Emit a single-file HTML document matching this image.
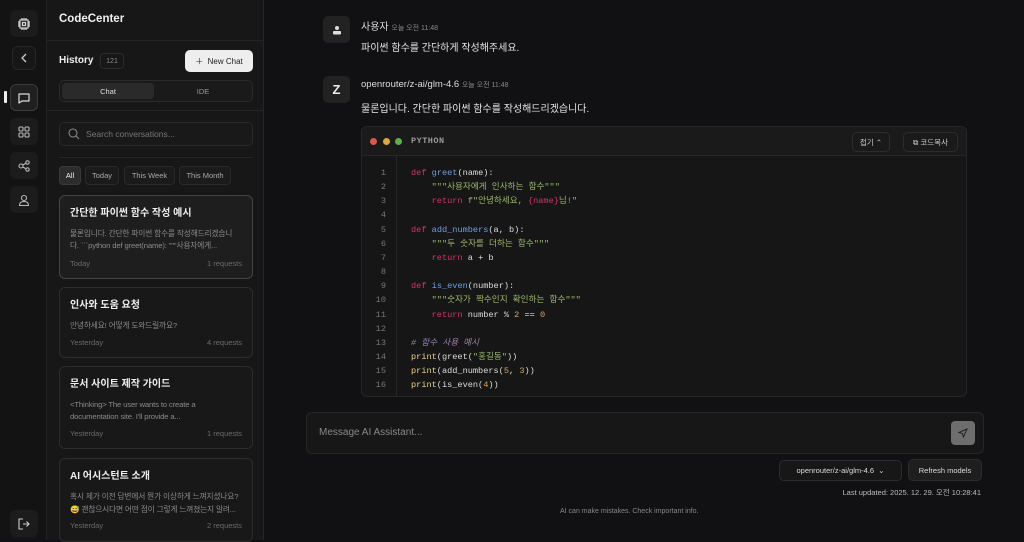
<!DOCTYPE html>
<html><head><meta charset="utf-8"><style>
*{box-sizing:border-box;margin:0;padding:0}
body{width:1024px;height:540px;overflow:hidden;background:#111113;font-family:"Liberation Sans","Noto Sans CJK KR",sans-serif;color:#e5e5e5;position:relative}
.a{position:absolute}
.rail{left:0;top:0;width:47px;height:540px;background:#131313;border-right:1px solid #222}
.ri{position:absolute;left:10px;width:28px;height:27px;border-radius:6px;background:#1c1c1c;display:flex;align-items:center;justify-content:center}
.side{left:47px;top:0;width:217px;height:540px;background:#171717;border-right:1px solid #262626}
.card{position:absolute;left:12px;width:194px;border:1px solid #2c2c2c;border-radius:6px;background:#181818;padding:0 9px 0 10px}
.card h4{font-size:10px;font-weight:bold;color:#eee;margin-top:12px;line-height:12px}
.card p{font-size:7.7px;color:#8a8a8a;line-height:12px;margin-top:8px;letter-spacing:-0.15px;white-space:nowrap;overflow:hidden;text-overflow:ellipsis}
.card .f{position:absolute;left:10px;right:10px;bottom:10px;display:flex;justify-content:space-between;font-size:7.5px;color:#6a6a6a}
.chip{position:absolute;top:166px;height:19px;border:1px solid #2a2a2a;border-radius:4px;font-size:7.5px;color:#aaa;display:flex;align-items:center;justify-content:center;background:#1b1b1b}
.code{left:361px;top:126px;width:606px;height:271px;background:#161616;border:1px solid #262626;border-radius:6px;overflow:hidden}
.ln{position:absolute;left:0;top:29px;width:35px;height:300px;border-right:1px solid #262626}
pre{font-family:"Liberation Mono","Noto Sans CJK KR",monospace;font-size:8.6px;line-height:14.15px;color:#ddd}
.k{color:#d6336c}.fn{color:#6d9fe0}.s{color:#9ab86a}.n{color:#e0a060}.c{color:#9a80b0;font-style:italic}.y{color:#e8d28a}
.btn{position:absolute;height:20px;border:1px solid #2c2c2c;border-radius:5px;background:#1a1a1a;font-size:7.5px;color:#ccc;display:flex;align-items:center;justify-content:center}
</style></head><body>
<div class="a rail">
 <div class="ri" style="top:10px"><svg width="14" height="14" viewBox="0 0 14 14" fill="none" stroke="#ddd" stroke-width="1.2"><rect x="3" y="3" width="8" height="8"/><rect x="5.5" y="5.5" width="3" height="3"/><path d="M5 1v2M7 1v2M9 1v2M5 11v2M7 11v2M9 11v2M1 5h2M1 7h2M1 9h2M11 5h2M11 7h2M11 9h2"/></svg></div>
 <div class="ri" style="top:46px;left:12px;width:24px;height:24px;background:#171717;border:1px solid #262626"><svg width="8" height="10"><path d="M6 1L2 5l4 4" stroke="#ccc" fill="none" stroke-width="1.3"/></svg></div>
 <div class="a" style="left:4px;top:91px;width:3px;height:12px;background:#eee;border-radius:1px"></div>
 <div class="ri" style="top:84px;border:1px solid #3a3a3a;background:#202020"><svg width="14" height="14"><path d="M2 3h10v7H5l-3 2z" stroke="#ddd" fill="none" stroke-width="1.2" stroke-linejoin="round"/></svg></div>
 <div class="ri" style="top:118px"><svg width="12" height="12" fill="none" stroke="#bbb" stroke-width="1.1"><rect x="1" y="1" width="4" height="4" rx="1"/><rect x="7" y="1" width="4" height="4" rx="1"/><rect x="1" y="7" width="4" height="4" rx="1"/><rect x="7" y="7" width="4" height="4" rx="1"/></svg></div>
 <div class="ri" style="top:152px"><svg width="12" height="12" fill="none" stroke="#bbb" stroke-width="1.1"><circle cx="3" cy="6" r="2"/><circle cx="9.5" cy="2.5" r="1.7"/><circle cx="9.5" cy="9.5" r="1.7"/><path d="M4.8 5l3-1.6M4.8 7l3 1.6"/></svg></div>
 <div class="ri" style="top:186px"><svg width="12" height="12" fill="none" stroke="#bbb" stroke-width="1.1"><circle cx="6" cy="4" r="2.5"/><path d="M1.5 11.5c0-3 2-4 4.5-4s4.5 1 4.5 4z"/></svg></div>
 <div class="ri" style="top:510px"><svg width="12" height="12" fill="none" stroke="#ccc" stroke-width="1.1"><path d="M5 1H1v10h4M5 6h6M8.5 3.5L11 6 8.5 8.5"/></svg></div>
</div>
<div class="a side">
 <div class="a" style="left:12px;top:13px;font-size:11.5px;font-weight:bold;color:#f0f0f0">CodeCenter</div>
 <div class="a" style="left:0;top:40px;width:216px;border-top:1px solid #242424"></div>
 <div class="a" style="left:12px;top:55px;font-size:10px;font-weight:bold;color:#eee">History</div>
 <div class="a" style="left:53px;top:53px;width:24px;height:16px;border:1px solid #2c2c2c;border-radius:4px;font-size:7px;color:#888;display:flex;align-items:center;justify-content:center">121</div>
 <div class="a" style="left:138px;top:50px;width:68px;height:22px;background:#eeeeee;border-radius:5px;font-size:8px;color:#222;display:flex;align-items:center;justify-content:center">＋&nbsp; New Chat</div>
 <div class="a" style="left:12px;top:80px;width:194px;height:22px;border:1px solid #2a2a2a;border-radius:5px;background:#1a1a1a"></div>
 <div class="a" style="left:15px;top:83px;width:92px;height:16px;background:#2a2a2a;border-radius:4px;font-size:7.5px;color:#ddd;display:flex;align-items:center;justify-content:center">Chat</div>
 <div class="a" style="left:110px;top:83px;width:92px;height:16px;font-size:7.5px;color:#999;display:flex;align-items:center;justify-content:center">IDE</div>
 <div class="a" style="left:0;top:110px;width:216px;border-top:1px solid #242424"></div>
 <div class="a" style="left:12px;top:122px;width:194px;height:24px;border:1px solid #2a2a2a;border-radius:5px;background:#191919"></div>
 <svg class="a" style="left:21px;top:128px" width="12" height="12" fill="none" stroke="#888" stroke-width="1.1"><circle cx="5" cy="5" r="4"/><path d="M8 8l3 3"/></svg>
 <div class="a" style="left:39px;top:129px;font-size:8.5px;color:#777">Search conversations...</div>
 <div class="a" style="left:12px;top:157px;width:194px;border-top:1px solid #262626"></div>
 <div class="chip" style="left:12px;width:22px;background:#2c2c2c;color:#eee;border-color:#3a3a3a">All</div>
 <div class="chip" style="left:38px;width:34px">Today</div>
 <div class="chip" style="left:77px;width:51px">This Week</div>
 <div class="chip" style="left:132px;width:52px">This Month</div>
 <div class="card" style="top:195px;height:84px;border-color:#444;background:#1e1e1e"><h4>간단한 파이썬 함수 작성 예시</h4><p>물론입니다. 간단한 파이썬 함수를 작성해드리겠습니</p><p style="margin-top:0">다. &#96;&#96;&#96;python def greet(name): &quot;&quot;&quot;사용자에게...</p><div class="f"><span>Today</span><span>1 requests</span></div></div>
 <div class="card" style="top:287px;height:71px"><h4>인사와 도움 요청</h4><p>안녕하세요! 어떻게 도와드릴까요?</p><div class="f"><span>Yesterday</span><span>4 requests</span></div></div>
 <div class="card" style="top:366px;height:83px"><h4>문서 사이트 제작 가이드</h4><p>&lt;Thinking&gt; The user wants to create a</p><p style="margin-top:0">documentation site. I'll provide a...</p><div class="f"><span>Yesterday</span><span>1 requests</span></div></div>
 <div class="card" style="top:458px;height:84px"><h4>AI 어시스턴트 소개</h4><p>혹시 제가 이전 답변에서 뭔가 이상하게 느껴지셨나요?</p><p style="margin-top:1px">😅 괜찮으시다면 어떤 점이 그렇게 느껴졌는지 알려...</p><div class="f" style="bottom:11px"><span>Yesterday</span><span>2 requests</span></div></div>
</div>
<div class="a" style="left:323px;top:16px;width:27px;height:27px;background:#222;border-radius:5px;display:flex;align-items:center;justify-content:center"><svg width="10" height="10" fill="#ddd"><circle cx="5" cy="3" r="2"/><rect x="1" y="6" width="8" height="3.5" rx="1"/></svg></div>
<div class="a" style="left:361px;top:18px;font-size:10px;color:#ddd">사용자 <span style="font-size:7px;color:#888">오늘 오전 11:48</span></div>
<div class="a" style="left:361px;top:39px;font-size:10px;color:#e5e5e5">파이썬 함수를 간단하게 작성해주세요.</div>
<div class="a" style="left:323px;top:76px;width:27px;height:27px;background:#222;border-radius:5px;display:flex;align-items:center;justify-content:center;font-weight:bold;font-size:13px;color:#eee">Z</div>
<div class="a" style="left:361px;top:79px;font-size:9.5px;color:#ddd">openrouter/z-ai/glm-4.6 <span style="font-size:7px;color:#888">오늘 오전 11:48</span></div>
<div class="a" style="left:361px;top:100px;font-size:10px;color:#e5e5e5">물론입니다. 간단한 파이썬 함수를 작성해드리겠습니다.</div>
<div class="a code">
 <div class="a" style="left:0;top:0;width:606px;height:29px;border-bottom:1px solid #262626;background:#1a1a1a"></div>
 <div class="a" style="left:8px;top:11px;width:7px;height:7px;border-radius:50%;background:#e0564f"></div>
 <div class="a" style="left:21px;top:11px;width:7px;height:7px;border-radius:50%;background:#dfa83a"></div>
 <div class="a" style="left:33px;top:11px;width:7px;height:7px;border-radius:50%;background:#5ab04a"></div>
 <div class="a" style="left:49px;top:9px;font-family:'Liberation Mono',monospace;font-size:8.5px;font-weight:bold;color:#999;letter-spacing:.5px">PYTHON</div>
 <div class="btn" style="left:490px;top:5px;width:38px">접기 ⌃</div>
 <div class="btn" style="left:541px;top:5px;width:55px">⧉ 코드복사</div>
 <div class="ln"></div>
 <pre class="a" style="left:0;top:39px;width:24px;text-align:right;color:#777">1
2
3
4
5
6
7
8
9
10
11
12
13
14
15
16
17</pre>
 <pre class="a" style="left:49px;top:39px"><span class="k">def</span> <span class="fn">greet</span>(name):
    <span class="s">&quot;&quot;&quot;사용자에게 인사하는 함수&quot;&quot;&quot;</span>
    <span class="k">return</span> <span class="s">f&quot;안녕하세요, </span><span class="k">{name}</span><span class="s">님!&quot;</span>

<span class="k">def</span> <span class="fn">add_numbers</span>(a, b):
    <span class="s">&quot;&quot;&quot;두 숫자를 더하는 함수&quot;&quot;&quot;</span>
    <span class="k">return</span> a + b

<span class="k">def</span> <span class="fn">is_even</span>(number):
    <span class="s">&quot;&quot;&quot;숫자가 짝수인지 확인하는 함수&quot;&quot;&quot;</span>
    <span class="k">return</span> number % <span class="n">2</span> == <span class="n">0</span>

<span class="c"># 함수 사용 예시</span>
<span class="y">print</span>(greet(<span class="s">&quot;홍길동&quot;</span>))
<span class="y">print</span>(add_numbers(<span class="n">5</span>, <span class="n">3</span>))
<span class="y">print</span>(is_even(<span class="n">4</span>))
<span class="y">print</span>(is_even(<span class="n">7</span>))</pre>
</div>
<div class="a" style="left:306px;top:412px;width:678px;height:42px;border:1px solid #262626;border-radius:6px;background:#171717"></div>
<div class="a" style="left:319px;top:427px;font-size:10px;color:#888">Message AI Assistant...</div>
<div class="a" style="left:951px;top:421px;width:24px;height:24px;background:#6e6e6e;border-radius:4px;display:flex;align-items:center;justify-content:center"><svg width="10" height="10" fill="none" stroke="#222" stroke-width="1"><path d="M9 1L1 4.5 4.5 5.5 5.5 9z"/></svg></div>
<div class="btn" style="left:779px;top:460px;width:123px;height:21px;background:#171717;color:#ddd">openrouter/z-ai/glm-4.6 &nbsp;⌄</div>
<div class="btn" style="left:908px;top:459px;width:74px;height:22px;background:#1e1e1e;color:#ddd">Refresh models</div>
<div class="a" style="right:43px;top:487px;font-size:7.5px;color:#bbb">Last updated: 2025. 12. 29. 오전 10:28:41</div>
<div class="a" style="left:560px;top:508px;font-size:7px;color:#888">AI can make mistakes. Check important info.</div>
</body></html>
